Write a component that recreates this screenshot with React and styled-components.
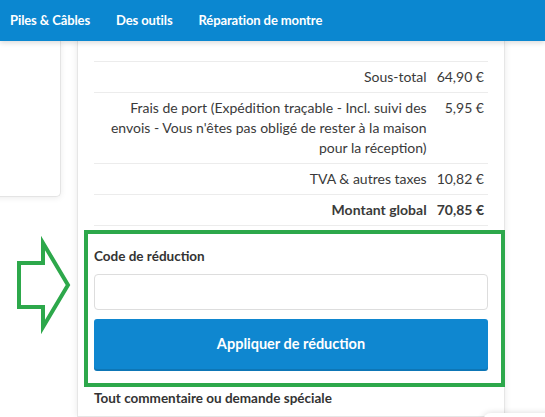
import { Fragment } from "react";
import styled, { createGlobalStyle } from "styled-components";

const GlobalStyle = createGlobalStyle`
  html, body {
    margin: 0;
    padding: 0;
    background: #fff;
    font-family: Lato, "Liberation Sans", sans-serif;
    color: #333;
    overflow: hidden;
  }
  * { box-sizing: border-box; }
`;

const Header = styled.header`
  position: relative;
  z-index: 2;
  height: 41px;
  background: #0b87d0;
  display: flex;
  align-items: center;
  gap: 26px;
  padding: 0 0 2px 10px;
  box-shadow: 0 2px 5px rgba(0, 0, 0, 0.14);
`;

const NavItem = styled.a`
  color: #fff;
  font-weight: 700;
  font-size: 13px;
  text-decoration: none;
  letter-spacing: -0.1px;
`;

const Page = styled.div`
  display: flex;
  align-items: flex-start;
  height: 376px;
`;

const LeftCol = styled.aside`
  width: 77px;
  flex-shrink: 0;
  display: flex;
  flex-direction: column;
`;

const SideCard = styled.div`
  margin-left: -10px;
  width: 71px;
  height: 156px;
  background: #fff;
  border: 1px solid #e4e4e4;
  border-top: none;
  border-radius: 0 0 5px 0;
  box-shadow: 0 1px 6px rgba(0, 0, 0, 0.08);
`;

const Arrow = styled.svg`
  margin: 44px 0 0 17px;
  overflow: visible;
`;

const MainCard = styled.main`
  width: 428px;
  height: 376px;
  background: #fff;
  border: 1px solid #e6e6e6;
  border-top: none;
  box-shadow: 0 0 7px rgba(0, 0, 0, 0.09);
  padding: 20px 16px 0 16px;
`;

const Totals = styled.div`
  display: grid;
  grid-template-columns: 1fr auto;
  font-size: 14px;
  line-height: 20px;
  color: #3a3a3a;
`;

const Cell = styled.div`
  border-top: 1px solid #ececec;
  padding: 5px ${(p) => (p.$value ? "4px" : "0")} 5px ${(p) => (p.$value ? "10px" : "6px")};
  text-align: right;
  font-weight: ${(p) => (p.$bold ? 700 : 400)};
  white-space: ${(p) => (p.$value ? "nowrap" : "normal")};
  &:nth-last-child(-n + 2) {
    border-bottom: 1px solid #ececec;
  }
`;

const DiscountBox = styled.section`
  margin: 4px -17px 0 -10px;
  border: 4px solid #2da84b;
  padding: 14px 13px 12px 6px;
`;

const FieldLabel = styled.label`
  display: block;
  font-weight: 700;
  font-size: 13.5px;
  color: #333;
  margin: 0 0 10px 0;
`;

const Input = styled.input`
  display: block;
  width: 100%;
  height: 36px;
  border: 1px solid #ddd;
  border-radius: 4px;
  background: #fff;
  margin-bottom: 9px;
`;

const ApplyButton = styled.button`
  display: block;
  width: 100%;
  height: 52px;
  border: none;
  border-radius: 3px;
  background: #0f87d0;
  box-shadow: inset 0 -2px 0 rgba(0, 0, 0, 0.12);
  color: #fff;
  font-family: inherit;
  font-weight: 700;
  font-size: 14.5px;
  padding-bottom: 4px;
  cursor: pointer;
`;

const CommentLabel = styled(FieldLabel)`
  margin: 3px 0 0 0;
`;

const Widget = styled.div`
  position: fixed;
  left: 483px;
  top: 413px;
  width: 120px;
  height: 60px;
  background: #fff;
  border-radius: 8px;
  box-shadow: 0 0 6px rgba(0, 0, 0, 0.15);
`;

const rows = [
  { label: "Sous-total", value: "64,90 €" },
  {
    label:
      "Frais de port (Expédition traçable - Incl. suivi des envois - Vous n'êtes pas obligé de rester à la maison pour la réception)",
    value: "5,95 €",
  },
  { label: "TVA & autres taxes", value: "10,82 €" },
  { label: "Montant global", value: "70,85 €", bold: true },
];

export default function App() {
  return (
    <>
      <GlobalStyle />
      <Header>
        <NavItem>Piles &amp; Câbles</NavItem>
        <NavItem>Des outils</NavItem>
        <NavItem>Réparation de montre</NavItem>
      </Header>
      <Page>
        <LeftCol>
          <SideCard />
          <Arrow width="52" height="88" viewBox="0 0 52 88">
            <path
              d="M2 22 H26 V2 L51 44 L26 86 V66 H2 Z"
              fill="none"
              stroke="#2da84b"
              strokeWidth="4"
              strokeLinejoin="miter"
            />
          </Arrow>
        </LeftCol>
        <MainCard>
          <Totals>
            {rows.map((r) => (
              <Fragment key={r.label}>
                <Cell $bold={r.bold}>{r.label}</Cell>
                <Cell $value $bold={r.bold}>{r.value}</Cell>
              </Fragment>
            ))}
          </Totals>
          <DiscountBox>
            <FieldLabel>Code de réduction</FieldLabel>
            <Input type="text" />
            <ApplyButton>Appliquer de réduction</ApplyButton>
          </DiscountBox>
          <CommentLabel>Tout commentaire ou demande spéciale</CommentLabel>
        </MainCard>
      </Page>
      <Widget />
    </>
  );
}
